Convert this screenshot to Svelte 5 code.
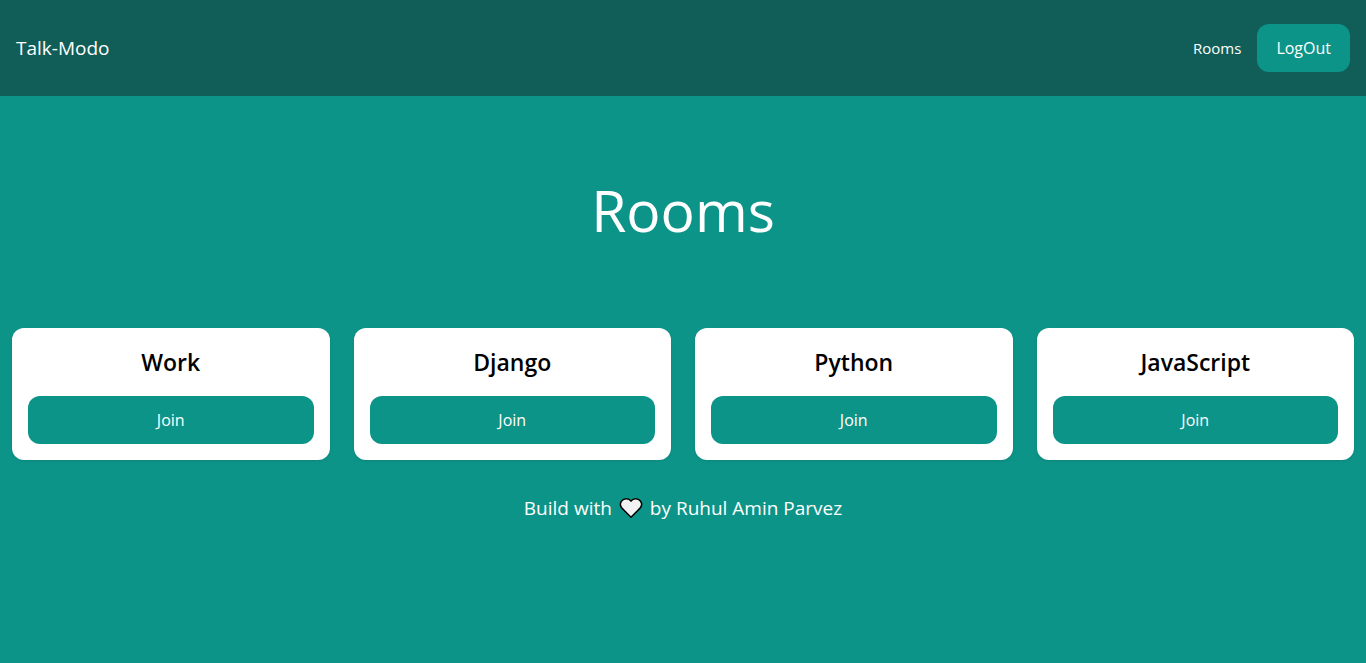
<script>
  const rooms = ['Work', 'Django', 'Python', 'JavaScript'];
</script>

<nav>
  <a class="brand" href="/">Talk-Modo</a>
  <div class="links">
    <a class="link" href="/rooms/">Rooms</a>
    <button class="logout" type="button">LogOut</button>
  </div>
</nav>

<header>
  <h1>Rooms</h1>
</header>

<main>
  {#each rooms as room}
    <section class="card">
      <h2>{room}</h2>
      <a class="join" href="/rooms/{room.toLowerCase()}/">Join</a>
    </section>
  {/each}
</main>

<footer>
  <span>Build with</span>
  <svg viewBox="0 0 24 24" aria-hidden="true">
    <path d="M12 21.2 L3.2 12.4 C1.2 10.2 0.9 7.2 2.6 5 C5 2 9.8 2 12 5.2 C14.2 2 19 2 21.4 5 C23.1 7.2 22.8 10.2 20.8 12.4 Z" />
  </svg>
  <span>by Ruhul Amin Parvez</span>
</footer>

<style>
  :global(body) {
    background: #0d9488;
    color: #fff;
    font-family: "Open Sans", "Noto Sans", sans-serif;
    font-size: 16px;
    line-height: 24px;
  }

  a {
    color: inherit;
    text-decoration: none;
  }

  nav {
    display: flex;
    align-items: center;
    justify-content: space-between;
    padding: 24px 16px;
    background: #115e59;
  }

  .brand {
    font-size: 19px;
    line-height: 28px;
  }

  .links {
    display: flex;
    align-items: center;
    gap: 16px;
  }

  .link {
    font-size: 15px;
  }

  .logout,
  .join {
    padding: 12px 19px;
    border: 0;
    border-radius: 12px;
    background: #0d9488;
    color: #fff;
    font: inherit;
    text-align: center;
    cursor: pointer;
  }

  header {
    padding: 78px 24px 82px;
    text-align: center;
  }

  h1 {
    margin: 0;
    font-size: 57px;
    font-weight: 400;
    line-height: 72px;
  }

  main {
    display: grid;
    grid-template-columns: repeat(4, 1fr);
    gap: 24px;
    padding: 0 12px;
  }

  .card {
    display: flex;
    flex-direction: column;
    gap: 16px;
    padding: 16px;
    border-radius: 12px;
    background: #fff;
    color: #000;
    text-align: center;
    box-shadow: 0 1px 3px rgb(0 0 0 / 10%);
  }

  h2 {
    margin: 0;
    font-size: 23px;
    font-weight: 600;
    line-height: 36px;
  }

  footer {
    display: flex;
    align-items: center;
    justify-content: center;
    gap: 7px;
    padding: 34px 16px;
    font-size: 19px;
    line-height: 28px;
  }

  svg {
    width: 24px;
    height: 24px;
    fill: #f2f2f2;
    stroke: #000;
    stroke-width: 1.5;
    stroke-linejoin: round;
  }
</style>
